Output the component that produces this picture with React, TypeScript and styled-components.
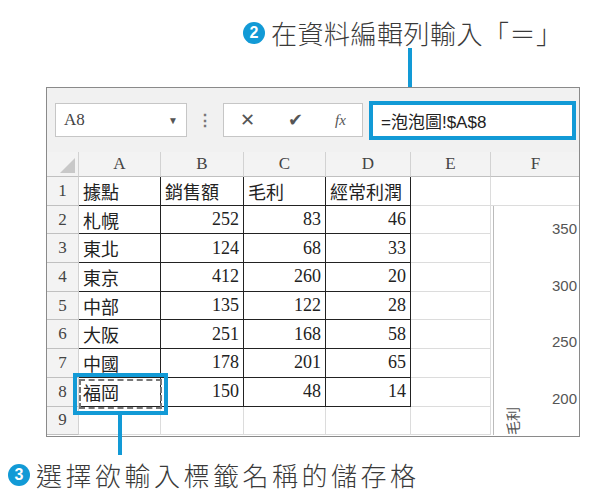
import styled, { createGlobalStyle } from 'styled-components';

const Global = createGlobalStyle`
  body { margin: 0; background: #fff; font-family: "Liberation Serif", "Noto Sans CJK TC", serif; }
`;

const BLUE = '#129ad6';
const COLS = [32, 82, 83, 82, 85, 80, 90];
const rows: string[][] = [
  ['據點', '銷售額', '毛利', '經常利潤'],
  ['札幌', '252', '83', '46'],
  ['東北', '124', '68', '33'],
  ['東京', '412', '260', '20'],
  ['中部', '135', '122', '28'],
  ['大阪', '251', '168', '58'],
  ['中國', '178', '201', '65'],
  ['福岡', '150', '48', '14'],
];

const Page = styled.div`
  position: relative;
  width: 600px;
  height: 498px;
  overflow: hidden;
`;
const Callout = styled.div<{ $top: number; $left: number; $ls: number }>`
  position: absolute;
  top: ${(p) => p.$top}px;
  left: ${(p) => p.$left}px;
  display: flex;
  align-items: center;
  gap: 6px;
  font-family: "Noto Sans CJK TC", sans-serif;
  font-weight: 300;
  font-size: 26px;
  letter-spacing: ${(p) => p.$ls}px;
  color: #3a3a3a;
  white-space: nowrap;
`;
const Badge = styled.span`
  width: 22px;
  height: 22px;
  border-radius: 50%;
  background: ${BLUE};
  color: #fff;
  font-family: "Liberation Sans", sans-serif;
  font-weight: bold;
  font-size: 16px;
  letter-spacing: 0;
  display: flex;
  align-items: center;
  justify-content: center;
`;
const VLine = styled.div<{ $top: number; $left: number; $h: number }>`
  position: absolute;
  top: ${(p) => p.$top}px;
  left: ${(p) => p.$left}px;
  height: ${(p) => p.$h}px;
  width: 4px;
  background: ${BLUE};
`;
const Win = styled.div`
  position: absolute;
  top: 87px;
  left: 46px;
  width: 534px;
  height: 350px;
  border: 1px solid #8a8a8a;
  box-sizing: border-box;
  background: #fff;
  overflow: hidden;
`;
const Toolbar = styled.div`
  height: 64px;
  background: #f1f1f1;
  display: flex;
  align-items: center;
  padding: 0 0 0 8px;
  font-family: "Liberation Sans", sans-serif;
`;
const NameBox = styled.div`
  width: 132px;
  height: 34px;
  border: 1px solid #c6c6c6;
  background: #fff;
  display: flex;
  align-items: center;
  justify-content: space-between;
  padding: 0 8px;
  box-sizing: border-box;
  font-family: "Liberation Serif", serif;
  font-size: 17px;
  color: #444;
`;
const Caret = styled.span`
  font-size: 10px;
  color: #555;
`;
const Dots = styled.div`
  width: 36px;
  text-align: center;
  color: #777;
  font-size: 16px;
  font-weight: bold;
`;
const Buttons = styled.div`
  width: 140px;
  height: 34px;
  border: 1px solid #c6c6c6;
  background: #fff;
  display: flex;
  align-items: center;
  justify-content: space-around;
  box-sizing: border-box;
  color: #555;
  font-size: 18px;
`;
const Fx = styled.span`
  font-family: "Liberation Serif", serif;
  font-style: italic;
  font-size: 15px;
`;
const Formula = styled.div`
  margin-left: 6px;
  width: 207px;
  height: 39px;
  border: 4px solid ${BLUE};
  box-sizing: border-box;
  background: #fff;
  display: flex;
  align-items: center;
  padding-left: 8px;
  font-family: "Liberation Sans", "Noto Sans CJK TC", sans-serif;
  font-size: 17px;
  color: #222;
`;
const Grid = styled.div`
  display: grid;
  grid-template-columns: ${COLS.map((c) => c + 'px').join(' ')};
  grid-template-rows: 25px repeat(9, 28.7px);
`;
const Head = styled.div`
  background: #f3f3f3;
  border-right: 1px solid #d2d2d2;
  border-bottom: 1px solid #c0c0c0;
  display: flex;
  align-items: center;
  justify-content: center;
  font-size: 17px;
  color: #444;
  position: relative;
`;
const Corner = styled.div`
  position: absolute;
  right: 3px;
  bottom: 3px;
  width: 0;
  height: 0;
  border-left: 15px solid transparent;
  border-bottom: 15px solid #c8c8c8;
`;
const Cell = styled.div<{ $num?: boolean; $data?: boolean }>`
  border-right: 1px solid ${(p) => (p.$data ? '#222' : '#dcdcdc')};
  border-bottom: 1px solid ${(p) => (p.$data ? '#222' : '#dcdcdc')};
  display: flex;
  align-items: center;
  justify-content: ${(p) => (p.$num ? 'flex-end' : 'flex-start')};
  padding: 0 4px;
  font-size: 18px;
  color: #222;
  font-family: "Liberation Serif", "Noto Sans CJK TC", serif;
  box-sizing: border-box;
`;
const ChartCell = styled.div`
  grid-column: 7;
  grid-row: 3 / span 9;
  border-left: 1px solid #bbb;
  margin-left: 2px;
  position: relative;
  font-family: "Liberation Sans", sans-serif;
  font-size: 15px;
  color: #555;
`;
const Tick = styled.div<{ $top: number }>`
  position: absolute;
  right: 4px;
  top: ${(p) => p.$top}px;
`;
const AxisTitle = styled.div`
  position: absolute;
  left: 4px;
  top: 205px;
  transform: rotate(-90deg);
  font-family: "Noto Sans CJK TC", sans-serif;
  font-size: 14px;
`;
const Select = styled.div`
  position: absolute;
  left: 26px;
  top: 285px;
  width: 95px;
  height: 42px;
  border: 4px solid ${BLUE};
  box-sizing: border-box;
  padding: 2px;
  &::after {
    content: '';
    display: block;
    height: 100%;
    border: 2px dashed #777;
    box-sizing: border-box;
  }
`;

export default function App() {
  return (
    <Page>
      <Global />
      <Callout $top={14} $left={243} $ls={0.5}>
        <Badge>2</Badge>在資料編輯列輸入「＝」
      </Callout>
      <VLine $top={48} $left={408} $h={58} />
      <Win>
        <Toolbar>
          <NameBox>
            A8<Caret>▼</Caret>
          </NameBox>
          <Dots>⋮</Dots>
          <Buttons>
            <span>✕</span>
            <span>✔</span>
            <Fx>fx</Fx>
          </Buttons>
          <Formula>=泡泡圖!$A$8</Formula>
        </Toolbar>
        <Grid>
          <Head>
            <Corner />
          </Head>
          {['A', 'B', 'C', 'D', 'E', 'F'].map((c) => (
            <Head key={c}>{c}</Head>
          ))}
          {Array.from({ length: 9 }).map((_, r) => {
            const data = rows[r];
            return [
              <Head key={'h' + r}>{r + 1}</Head>,
              ...[0, 1, 2, 3].map((c) => (
                <Cell key={r + '-' + c} $data={!!data} $num={c > 0 && r > 0}>
                  {data ? data[c] : ''}
                </Cell>
              )),
              <Cell key={r + 'e'} />,
              ...(r < 1 ? [<Cell key={r + 'f'} />] : []),
            ];
          })}
          <ChartCell>
            <Tick $top={14}>350</Tick>
            <Tick $top={71}>300</Tick>
            <Tick $top={127}>250</Tick>
            <Tick $top={184}>200</Tick>
            <AxisTitle>毛利</AxisTitle>
          </ChartCell>
        </Grid>
        <Select />
      </Win>
      <VLine $top={413} $left={118} $h={42} />
      <Callout $top={456} $left={8} $ls={3.5}>
        <Badge>3</Badge>選擇欲輸入標籤名稱的儲存格
      </Callout>
    </Page>
  );
}
